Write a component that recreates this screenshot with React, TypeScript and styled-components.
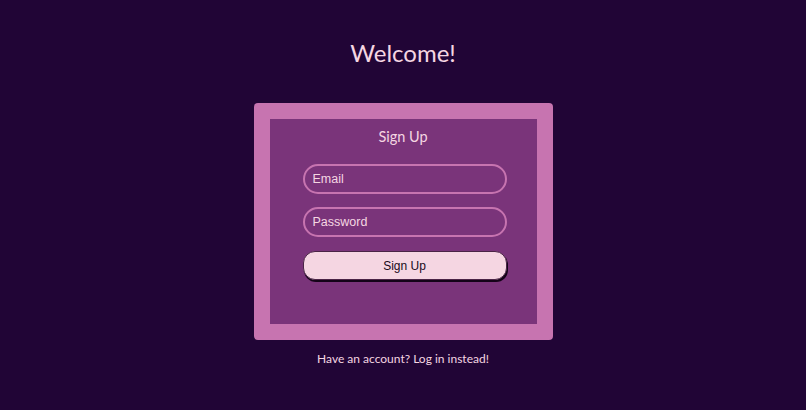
import React, { useState } from "react";
import styled, { createGlobalStyle } from "styled-components";

const GlobalStyle = createGlobalStyle`
  html, body {
    margin: 0;
    padding: 0;
    background: #210536;
  }
  body {
    font-family: "Lato", "Open Sans", sans-serif;
  }
`;

const Page = styled.div`
  width: 806px;
  height: 410px;
  display: flex;
  flex-direction: column;
  align-items: center;
  background: #210536;
  color: #f5d6e2;
`;

const Title = styled.h1`
  margin: 36px 0 0;
  height: 34px;
  font-size: 24px;
  line-height: 34px;
  font-weight: 400;
`;

const Card = styled.div`
  margin-top: 33px;
  width: 299px;
  box-sizing: border-box;
  padding: 16px;
  background: #c774b0;
  border-radius: 4px;
`;

const Panel = styled.form`
  height: 205px;
  box-sizing: border-box;
  padding: 7px 0 0 3px;
  display: flex;
  flex-direction: column;
  align-items: center;
  background: #7a347a;
`;

const PanelTitle = styled.h2`
  margin: 0 0 16px -3px;
  font-size: 14.5px;
  line-height: 22px;
  font-weight: 400;
`;

const Input = styled.input`
  width: 204px;
  height: 30px;
  box-sizing: border-box;
  margin-bottom: 13px;
  padding: 0 8px;
  border: 2px solid #c774b0;
  border-radius: 15px;
  background: transparent;
  color: #f5d6e2;
  font-family: "Liberation Sans", Arial, sans-serif;
  font-size: 12.5px;
  outline: none;

  &::placeholder {
    color: #f5d6e2;
  }
`;

const Button = styled.button`
  width: 204px;
  height: 29px;
  margin-top: 1px;
  box-sizing: border-box;
  border: 1px solid #4a2446;
  border-radius: 12px;
  box-shadow: 1px 2px 0 #140318;
  background: #f5d6e2;
  color: #1a0a1a;
  font-family: "Liberation Sans", Arial, sans-serif;
  font-size: 12px;
  cursor: pointer;
`;

const Footer = styled.p`
  margin: 10px 0 0;
  font-size: 12px;
  line-height: 18px;
`;

export default function App() {
  const [email, setEmail] = useState<string>("");
  const [password, setPassword] = useState<string>("");

  return (
    <>
      <GlobalStyle />
      <Page>
        <Title>Welcome!</Title>
        <Card>
          <Panel onSubmit={(e) => e.preventDefault()}>
            <PanelTitle>Sign Up</PanelTitle>
            <Input
              type="email"
              placeholder="Email"
              value={email}
              onChange={(e) => setEmail(e.target.value)}
            />
            <Input
              type="password"
              placeholder="Password"
              value={password}
              onChange={(e) => setPassword(e.target.value)}
            />
            <Button type="submit">Sign Up</Button>
          </Panel>
        </Card>
        <Footer>Have an account? Log in instead!</Footer>
      </Page>
    </>
  );
}
